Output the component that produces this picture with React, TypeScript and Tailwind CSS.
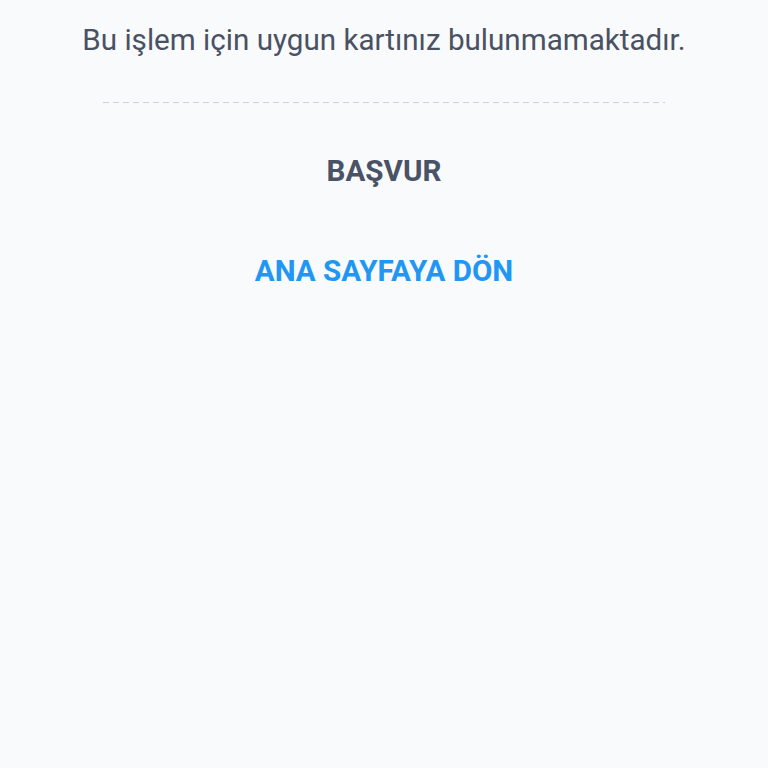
import React from 'react';

const App: React.FC = () => {
  return (
    <div className="min-h-[768px] w-full bg-[#f8fafc] font-['Roboto',sans-serif]">
      <div className="flex flex-col items-center pt-[22px]">
        <p className="text-[29.6px] leading-[36px] text-[#4a5163] text-center">
          Bu işlem için uygun kartınız bulunmamaktadır.
        </p>
        {/* dashed divider */}
        <div className="mt-[44px] h-px w-[562px] bg-[repeating-linear-gradient(to_right,#cdd1d8_0px,#cdd1d8_6px,transparent_6px,transparent_10px)]" />
        <button className="mt-[48px] h-[40px] px-6 text-[29.6px] font-bold leading-[40px] text-[#4a5265]">
          BAŞVUR
        </button>
        <button className="mt-[60px] h-[40px] px-6 text-[29.6px] font-bold leading-[40px] text-[#2196f3]">
          ANA SAYFAYA DÖN
        </button>
      </div>
    </div>
  );
};

export default App;
